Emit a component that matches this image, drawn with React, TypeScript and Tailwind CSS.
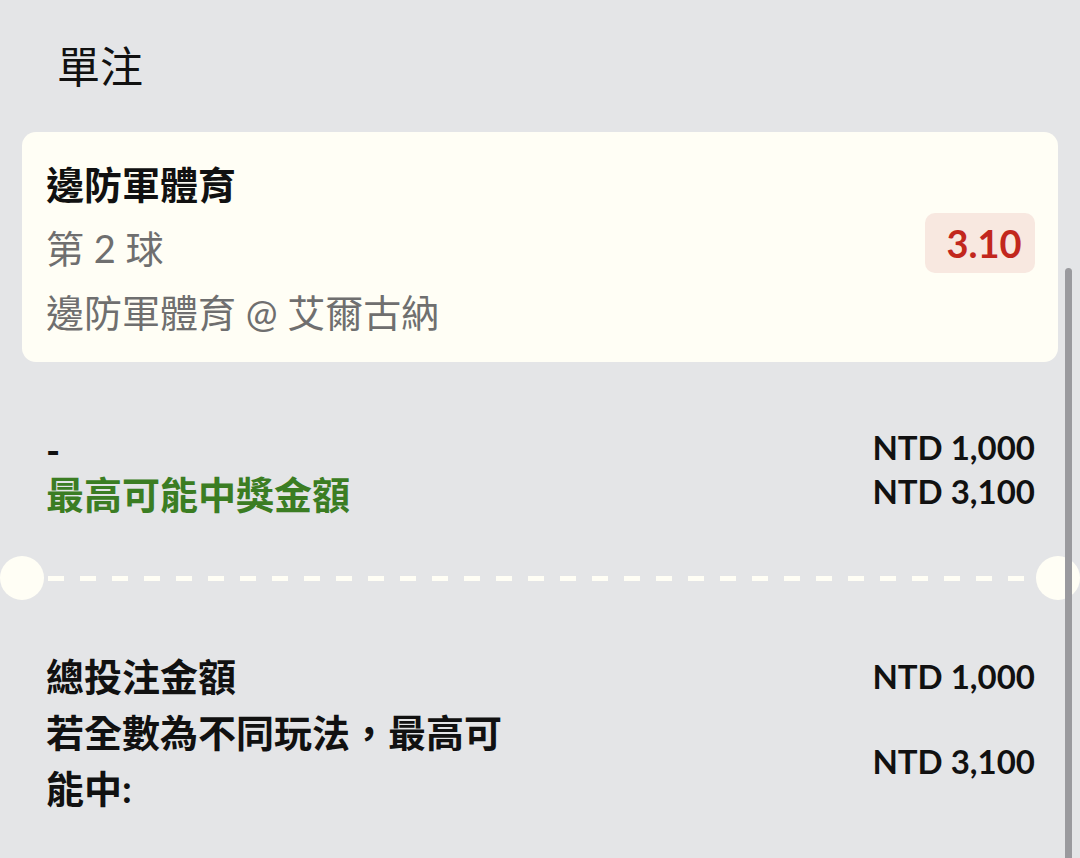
import React from "react";

const font = { fontFamily: "Lato, 'Noto Sans CJK TC', 'Noto Sans', sans-serif" };

export default function App() {
  return (
    <div
      className="relative h-[858px] w-full overflow-hidden bg-[#e4e5e7] text-[#111111]"
      style={font}
    >
      <div className="pl-[57px] pt-[35px] text-[43px] leading-[64px] font-normal">單注</div>

      <div className="mx-[22px] mt-[33px] flex h-[230px] items-center justify-between rounded-[14px] bg-[#fffef5] pl-[24px] pr-[23px]">
        <div className="flex flex-col pt-[2px] text-[38px]">
          <div className="font-bold leading-[64px]">邊防軍體育</div>
          <div className="leading-[64px] text-[#6f6f6f]">第 2 球</div>
          <div className="leading-[64px] text-[#6f6f6f]">邊防軍體育 @ 艾爾古納</div>
        </div>
        <div className="mb-[8px] flex h-[60px] w-[110px] items-center justify-center rounded-[10px] bg-[#f8e8e0] pl-[8px] text-[38px] font-bold text-[#c2271d]">
          3.10
        </div>
      </div>

      <div className="mt-[63px] flex justify-between pl-[46px] pr-[45px]">
        <div className="flex flex-col pt-[3px] text-[38px] font-bold">
          <div className="leading-[44px]">-</div>
          <div className="leading-[44px] text-[#3b7d23]">最高可能中獎金額</div>
        </div>
        <div className="flex flex-col items-end text-[33px] font-bold">
          <div className="leading-[44px]">NTD 1,000</div>
          <div className="leading-[44px]">NTD 3,100</div>
        </div>
      </div>

      <div className="mt-[40px] flex items-center">
        <div className="h-[44px] w-[44px] shrink-0 rounded-full bg-[#fffef5]" />
        <div className="mx-[4px] h-[5px] flex-1 bg-[repeating-linear-gradient(90deg,#fffef5_0_16px,transparent_16px_32px)]" />
        <div className="h-[44px] w-[44px] shrink-0 rounded-full bg-[#fffef5]" />
      </div>

      <div className="mt-[48px] flex flex-col pl-[46px] pr-[45px] text-[38px] font-bold">
        <div className="flex items-center justify-between">
          <div className="leading-[56px]">總投注金額</div>
          <div className="mb-[1px] text-[33px] leading-[44px]">NTD 1,000</div>
        </div>
        <div className="flex items-center justify-between">
          <div className="w-[480px] leading-[56px]">若全數為不同玩法，最高可能中:</div>
          <div className="mt-[2px] text-[33px] leading-[44px]">NTD 3,100</div>
        </div>
      </div>

      <div className="absolute bottom-0 right-[8px] top-[268px] w-[7px] rounded-t-full bg-[#9a9a9e]" />
    </div>
  );
}
